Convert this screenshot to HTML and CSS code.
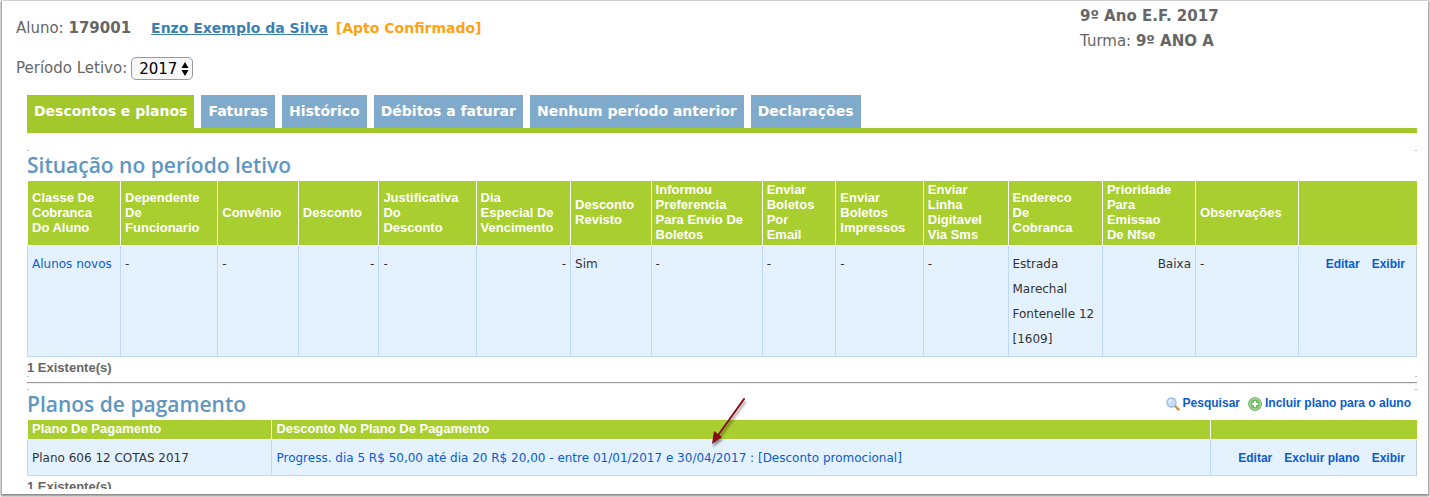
FILE: index.html
```html
<!DOCTYPE html>
<html lang="pt-BR">
<head>
<meta charset="utf-8">
<title>Descontos e planos</title>
<link rel="stylesheet" href="styles.css">
</head>
<body>
<div class="window">
<main class="page">
  <header class="student">
    <div class="student-main">
      <p class="line">Aluno: <strong class="code">179001</strong><a class="name" href="#">Enzo Exemplo da Silva</a><strong class="status">[Apto Confirmado]</strong></p>
      <div class="period">
        <label for="period">Período Letivo:</label>
        <span class="picker">
          <select id="period"><option>2017</option></select>
          <svg class="arrows" viewBox="0 0 8 14" aria-hidden="true"><path d="M4 0 7.500 6H.5zM4 14 .5 8h7z"/></svg>
        </span>
      </div>
    </div>
    <div class="student-class">
      <p class="line"><strong>9º Ano E.F. 2017</strong></p>
      <p class="line">Turma: <strong>9º ANO A</strong></p>
    </div>
  </header>

  <nav class="tabs">
    <a class="tab active" href="#">Descontos e planos</a>
    <a class="tab" href="#">Faturas</a>
    <a class="tab" href="#">Histórico</a>
    <a class="tab" href="#">Débitos a faturar</a>
    <a class="tab" href="#">Nenhum período anterior</a>
    <a class="tab" href="#">Declarações</a>
  </nav>

  <section class="panel">
    <div class="title"><h2>Situação no período letivo</h2></div>
    <table class="grid">
      <colgroup>
        <col class="w93"><col class="w97"><col class="w81"><col class="w81"><col class="w97"><col class="w94"><col class="w81"><col class="w111"><col class="w74"><col class="w87"><col class="w84"><col class="w95"><col class="w93"><col class="w103"><col>
      </colgroup>
      <thead>
        <tr>
          <th>Classe De Cobranca<br>Do Aluno</th>
          <th>Dependente<br>De<br>Funcionario</th>
          <th>Convênio</th>
          <th>Desconto</th>
          <th>Justificativa<br>Do<br>Desconto</th>
          <th>Dia<br>Especial De Vencimento</th>
          <th>Desconto Revisto</th>
          <th>Informou Preferencia<br>Para Envio De Boletos</th>
          <th>Enviar Boletos<br>Por<br>Email</th>
          <th>Enviar Boletos Impressos</th>
          <th>Enviar<br>Linha<br>Digitavel<br>Via Sms</th>
          <th>Endereco<br>De<br>Cobranca</th>
          <th>Prioridade<br>Para<br>Emissao<br>De Nfse</th>
          <th>Observações</th>
          <th></th>
        </tr>
      </thead>
      <tbody>
        <tr>
          <td><a href="#">Alunos novos</a></td>
          <td>-</td>
          <td>-</td>
          <td class="right">-</td>
          <td>-</td>
          <td class="right">-</td>
          <td>Sim</td>
          <td>-</td>
          <td>-</td>
          <td>-</td>
          <td>-</td>
          <td>Estrada Marechal Fontenelle 12 [1609]</td>
          <td class="right">Baixa</td>
          <td>-</td>
          <td><div class="actions"><a href="#">Editar</a><a href="#">Exibir</a></div></td>
        </tr>
      </tbody>
    </table>
    <p class="count">1 Existente(s)</p>
  </section>

  <hr class="rule">

  <section class="panel">
    <div class="title">
      <h2>Planos de pagamento</h2>
      <div class="tools">
        <a href="#">
          <svg class="icon" viewBox="0 0 14 14" aria-hidden="true"><path d="m8.500 8.500 4 4" stroke="#c98a4b" stroke-width="2.400" stroke-linecap="round"/><circle cx="5.500" cy="5.500" r="4.500" fill="#c3def8" stroke="#9dbce4" stroke-width="1.400"/><path d="M3 5.500A2.500 2.500 0 0 1 5.500 3" fill="none" stroke="#fff" stroke-width="1.200"/></svg>
          Pesquisar</a>
        <a href="#">
          <svg class="icon" viewBox="0 0 14 14" aria-hidden="true"><circle cx="7" cy="7" r="6.300" fill="#6fba5b" stroke="#4d963f" stroke-width=".9"/><circle cx="7" cy="7" r="5.300" fill="none" stroke="#c9e8bd" stroke-width="1"/><path d="M7 3.900v6.200M3.900 7h6.200" stroke="#fff" stroke-width="2.200"/></svg>
          Incluir plano para o aluno</a>
      </div>
    </div>
    <table class="grid plans">
      <colgroup><col class="w244"><col class="w940"><col></colgroup>
      <thead>
        <tr><th>Plano De Pagamento</th><th>Desconto No Plano De Pagamento</th><th></th></tr>
      </thead>
      <tbody>
        <tr>
          <td>Plano 606 12 COTAS 2017</td>
          <td><a href="#">Progress. dia 5 R$ 50,00 até dia 20 R$ 20,00 - entre 01/01/2017 e 30/04/2017 : [Desconto promocional]</a>
            <svg class="pointer" viewBox="0 0 40 54" aria-hidden="true"><path d="M34 4 9 39" stroke="#8b0b12" stroke-width="2" stroke-linecap="round"/><path d="M2 49 4 36 12 42z" fill="#8b0b12"/></svg>
          </td>
          <td><div class="actions"><a href="#">Editar</a><a href="#">Excluir plano</a><a href="#">Exibir</a></div></td>
        </tr>
      </tbody>
    </table>
    <p class="count">1 Existente(s)</p>
  </section>
</main>
</div>
</body>
</html>
```
FILE: styles.css
```css
* { box-sizing: border-box; }

body {
  margin: 0;
  padding: 1px 2px 3px;
  height: 100vh;
  background: #f4f4f4;
  color: #666;
  font-family: "DejaVu Sans", Verdana, sans-serif;
  font-size: 15px;
  line-height: 25px;
}

p, h2 { margin: 0; }
a { color: #0b5bd0; text-decoration: none; }

.window {
  height: 100%;
  padding-bottom: 5px;
  background: #fff;
  box-shadow: 0 1px 2px 1px #888;
}

.page {
  height: 100%;
  overflow: hidden;
  padding: 3px 11px 0 14px;
}

.student { display: flex; height: 91px; }
.student-main { flex: 1; padding-top: 12px; }
.student-class { width: 337px; }
.code { margin-right: 20px; }
.name, .status { font-size: 14px; font-weight: bold; }
.name { margin-right: 8px; color: #3a80b3; text-decoration: underline; }
.status { color: #ffa214; }

.period { display: flex; align-items: center; gap: 4px; margin-top: 15px; }
.picker { position: relative; display: flex; }
.picker select {
  appearance: none;
  width: 62px;
  height: 23px;
  padding: 0 7px;
  border: 1px solid #999;
  border-radius: 5px;
  background: #f7f7f7;
  color: #000;
  font: 15px "DejaVu Sans", Verdana, sans-serif;
}
.arrows { position: absolute; top: 5px; right: 4px; width: 8px; height: 14px; pointer-events: none; }

.tabs {
  display: flex;
  gap: 7px;
  margin-left: 11px;
  border-bottom: 5px solid #a2c82b;
}
.tab {
  padding: 4px 7px;
  background: #7faacb;
  color: #fff;
  font-size: 14px;
  font-weight: bold;
  white-space: nowrap;
}
.active { background: #a2c82b; }

.panel {
  position: relative;
  margin-left: 11px;
}
.panel::before, .panel::after {
  content: "";
  display: block;
  height: 1px;
  border: solid #b5c0c8;
  border-width: 0 2px;
}
.tabs + .panel { margin-top: 17px; }

.title { display: flex; justify-content: space-between; align-items: flex-start; height: 30px; }
h2 {
  color: #6096c0;
  font: 600 21px/29px "Open Sans", "Noto Sans", sans-serif;
}
.tools { display: flex; gap: 8px; margin-right: 6px; }
.tools a {
  display: flex;
  align-items: center;
  gap: 3px;
  font: bold 12px/27px "Liberation Sans", Arial, sans-serif;
}
.icon { width: 14px; height: 14px; fill: none; }

.grid {
  width: 100%;
  table-layout: fixed;
  border-collapse: collapse;
  color: #333;
}
.grid th {
  padding: 1px 4px 3px;
  border: solid #fff;
  border-width: 0 1px 1px;
  background: #a8ce2f;
  color: #fff;
  font: bold 13px/15px "Liberation Sans", Arial, sans-serif;
  text-align: left;
}
.grid th:last-child { border-right: 0; }
.grid td {
  padding: 6px 4px 4px;
  border: 1px solid #c0daf6;
  border-top: 0;
  background: #e4f2ff;
  font-size: 12px;
  vertical-align: top;
}
.grid td:last-child { border-right-color: #c4ccd4; }
.grid .right { text-align: right; }
.plans td { position: relative; }
.actions { display: flex; justify-content: flex-end; gap: 12px; padding-right: 7px; }
.actions a { font: bold 12px/25px "Liberation Sans", Arial, sans-serif; }

.w74 { width: 5.3%; }
.w81 { width: 5.8%; }
.w84 { width: 6.1%; }
.w87 { width: 6.3%; }
.w93 { width: 6.7%; }
.w94 { width: 6.8%; }
.w95 { width: 6.8%; }
.w97 { width: 7%; }
.w103 { width: 7.4%; }
.w111 { width: 8%; }
.w244 { width: 17.6%; }
.w940 { width: 67.6%; }

.count { padding-top: 2px; font: bold 13px/17px "Liberation Sans", Arial, sans-serif; }

.rule {
  height: 2px;
  margin: 5px 0 5px 11px;
  border: 0;
  border-top: 1px solid #999;
  border-bottom: 1px solid #eee;
}

.pointer {
  position: absolute;
  left: 438px;
  bottom: 26px;
  width: 40px;
  height: 54px;
  fill: none;
  filter: drop-shadow(1px 3px 1px #0006);
}
```
